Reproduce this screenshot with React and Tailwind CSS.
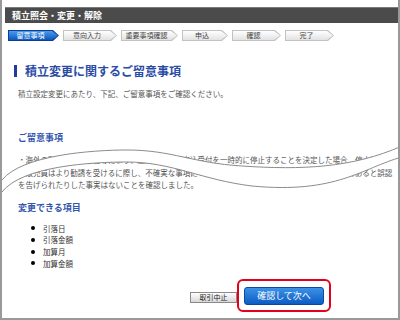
const steps = [
  { label: '留意事項', w: 'w-[51px]', active: true },
  { label: '意向入力', w: 'w-[54px]' },
  { label: '重要事項確認', w: 'w-[57px]' },
  { label: '申込', w: 'w-[46px]' },
  { label: '確認', w: 'w-[49px]' },
  { label: '完了', w: 'w-[49px]' },
]

const arrow = '[clip-path:polygon(0_0,calc(100%_-_6px)_0,100%_50%,calc(100%_-_6px)_100%,0_100%)]'

function Step({ label, w, active }) {
  return (
    <div className={`${w} h-[11px] p-px ${arrow} ${active ? 'bg-[#0b3f96]' : 'bg-[#c2c2c2]'}`}>
      <div
        className={`flex h-full items-center justify-center pr-[6px] text-[7px] leading-none ${arrow} ${
          active
            ? 'bg-gradient-to-b from-[#4a9bec] to-[#0c56bd] text-white'
            : 'bg-gradient-to-b from-white to-[#e2e2e2] text-[#444]'
        }`}
      >
        {label}
      </div>
    </div>
  )
}

// torn-paper cut drawn over the notes block
function Tear() {
  const upper = 'M0,180 C20,155 90,150 125,150 C170,150 190,163 240,166 C300,170 350,168 400,146'
  const lower = 'M0,192 C20,166 90,162 125,162 C170,162 200,180 250,186 C335,194 360,168 400,157'
  const band =
    upper +
    ' L400,157 C360,168 335,194 250,186 C200,180 170,162 125,162 C90,162 20,166 0,192 Z'
  return (
    <svg
      className="pointer-events-none absolute left-0 top-[140px]"
      width="400"
      height="60"
      viewBox="0 140 400 60"
    >
      <path d={band} fill="#fff" />
      <path d={upper} fill="none" stroke="#8c8c8c" strokeWidth="1" />
      <path d={lower} fill="none" stroke="#8c8c8c" strokeWidth="1" />
    </svg>
  )
}

export default function App() {
  const items = ['引落日', '引落金額', '加算月', '加算金額']

  return (
    <div
      className="relative h-[320px] w-[400px] overflow-hidden border-x-2 border-b-2 border-[#999] bg-white pl-[3px] pt-[7px]"
      style={{ fontFamily: '"Noto Sans CJK JP", "Noto Sans", sans-serif' }}
    >
      {/* page header */}
      <div className="flex h-[16px] items-center border-t border-[#7a7a7a] bg-[#4b4b4b] pl-[7px] text-[9px] font-bold leading-none text-white">
        積立照会・変更・解除
      </div>

      {/* step indicator */}
      <div className="ml-[3px] mt-[7px] flex gap-[4px]">
        {steps.map((s) => (
          <Step key={s.label} {...s} />
        ))}
      </div>

      {/* title */}
      <div className="ml-[9px] mt-[22px] flex h-[16px] items-center gap-[8px]">
        <span className="h-[12px] w-[3px] bg-[#24399b]" />
        <h1 className="text-[12px] font-bold leading-[16px] text-[#2a4ba6]">
          積立変更に関するご留意事項
        </h1>
      </div>
      <p className="ml-[13px] mt-[9px] text-[7.5px] leading-[12px] text-[#555]">
        積立設定変更にあたり、下記、ご留意事項をご確認ください。
      </p>

      {/* notes */}
      <h2 className="ml-[13px] mt-[32px] text-[9px] font-bold leading-[12px] text-[#3355b0]">
        ご留意事項
      </h2>
      <div className="ml-[13px] mt-[10px] text-[7.5px] leading-[12.5px] text-[#555]">
        <p className="whitespace-nowrap">
          ・海外の取引所の休業日等により、運用会社等が申込受付を一時的に停止することを決定した場合、停止は
        </p>
        <p className="whitespace-nowrap">
          ・販売員はより勧誘を受けるに際し、不確実な事項について断定的な判断の提供を受けたり、確実であると誤認
        </p>
        <p className="whitespace-nowrap">を告げられたりした事実はないことを確認しました。</p>
      </div>

      {/* changeable items */}
      <h2 className="ml-[13px] mt-[10px] text-[9px] font-bold leading-[12px] text-[#3355b0]">
        変更できる項目
      </h2>
      <ul className="mt-[9px]">
        {items.map((t) => (
          <li key={t} className="ml-[26px] flex h-[11.7px] items-center gap-[8px] text-[7.5px] text-[#333]">
            <span className="h-[4px] w-[4px] rounded-full bg-black" />
            {t}
          </li>
        ))}
      </ul>

      {/* actions */}
      <div className="ml-[185px] mt-[10px] flex items-center">
        <button className="mt-[4px] flex h-[11px] w-[47px] items-center justify-center border border-[#8a8a8a] bg-gradient-to-b from-white to-[#d8d8d8] text-[7px] leading-none text-[#222]">
          取引中止
        </button>
        <div className="flex h-[33px] w-[94px] items-center justify-center rounded-[6px] border-2 border-[#e3001b]">
          <button className="flex h-[18px] w-[80px] items-center justify-center rounded-[3px] border border-[#0a4b9e] bg-gradient-to-b from-[#3b92e6] to-[#0a5cc4] text-[9px] leading-none text-white">
            確認して次へ
          </button>
        </div>
      </div>

      <Tear />
    </div>
  )
}
